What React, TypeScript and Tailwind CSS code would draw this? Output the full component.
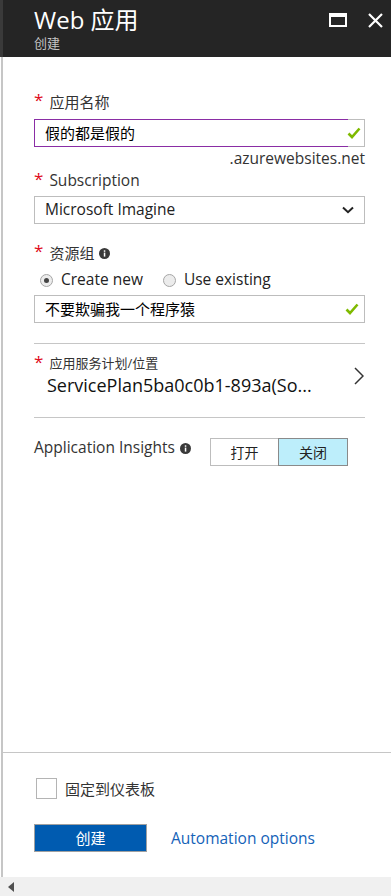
import React from "react";

const FONT = '"Open Sans", "Noto Sans", "Noto Sans CJK SC", sans-serif';

function Info() {
  return (
    <svg width="11" height="11" viewBox="0 0 11 11" className="inline-block">
      <circle cx="5.5" cy="5.5" r="5.5" fill="#3a3a3a" />
      <rect x="4.8" y="4.6" width="1.5" height="4" fill="#fff" />
      <rect x="4.8" y="2.3" width="1.5" height="1.5" fill="#fff" />
    </svg>
  );
}

function Check() {
  return (
    <svg width="14" height="12" viewBox="0 0 14 12">
      <path d="M1.5 6.5 L5 10 L12.5 1.5" stroke="#7fba00" strokeWidth="2.6" fill="none" />
    </svg>
  );
}

function Star() {
  return <span className="text-[#e00b1c] text-[17px] leading-none mr-[6px] relative top-[-3px]">*</span>;
}

function Radio({ checked }: { checked?: boolean }) {
  return (
    <span className="w-[13px] h-[13px] rounded-full border border-[#a6a6a6] bg-[#ececec] flex items-center justify-center">
      {checked && <span className="w-[5px] h-[5px] rounded-full bg-[#444]" />}
    </span>
  );
}

export default function App() {
  return (
    <div className="w-[391px] h-[896px] flex flex-col bg-white overflow-hidden" style={{ fontFamily: FONT }}>
      {/* Header */}
      <div className="h-[57px] bg-[#252525] flex shrink-0">
        <div className="w-[3px] bg-[#3a3a3a]" />
        <div className="flex-1 flex justify-between pl-[31px] pr-[8px]">
          <div className="flex flex-col pt-[8px]">
            <div className="text-white text-[24px] leading-[24px]">Web 应用</div>
            <div className="text-[#c4c4c4] text-[13px] leading-[16px] mt-[3px]">创建</div>
          </div>
          <div className="flex items-start pt-[13px] gap-[21px]">
            <div className="w-[18px] h-[14px] border-2 border-t-[4px] border-white" />
            <svg width="15" height="15" viewBox="0 0 15 15">
              <path d="M1 1 L14 14 M14 1 L1 14" stroke="#fff" strokeWidth="2.2" />
            </svg>
          </div>
        </div>
      </div>

      {/* Body */}
      <div className="flex-1 flex flex-col ml-[1px] border-l-2 border-[#c6c6c6]">
        <div className="flex-1 flex flex-col pl-[31px] pr-[26px]">
          <div className="mt-[35px] h-[20px] flex items-center text-[15px] text-[#333]">
            <Star />
            <span>应用名称</span>
          </div>
          <div className="mt-[7px] h-[28px] flex">
            <div className="flex-1 border border-[#8a2da5] border-r-0 flex items-center pl-[10px] text-[15px] text-black">
              假的都是假的
            </div>
            <div className="w-[17px] border border-l-0 border-[#bdbdbd] flex items-center justify-start">
              <span className="-ml-[1px]"><Check /></span>
            </div>
          </div>
          <div className="h-[20px] mt-[1px] text-right text-[15.5px] leading-[20px] text-[#333]">.azurewebsites.net</div>
          <div className="mt-[3px] h-[20px] flex items-center text-[15.5px] text-[#333]">
            <Star />
            <span>Subscription</span>
          </div>
          <div className="mt-[5px] h-[28px] border border-[#bdbdbd] flex items-center justify-between pl-[10px] pr-[10px] text-[15.5px] text-[#222]">
            <span>Microsoft Imagine</span>
            <svg width="12" height="8" viewBox="0 0 12 8">
              <path d="M1 1.5 L6 6.2 L11 1.5" stroke="#222" strokeWidth="2" fill="none" />
            </svg>
          </div>
          <div className="mt-[19px] h-[20px] flex items-center text-[15px] text-[#333]">
            <Star />
            <span>资源组</span>
            <span className="ml-[5px] flex"><Info /></span>
          </div>
          <div className="mt-[7px] h-[20px] flex items-center text-[15.5px] text-[#222] pl-[6px]">
            <Radio checked />
            <span className="ml-[8px]">Create new</span>
            <span className="ml-[20px]"><Radio /></span>
            <span className="ml-[8px]">Use existing</span>
          </div>
          <div className="mt-[5px] h-[28px] border border-[#bdbdbd] flex items-center justify-between pl-[10px] pr-[5px] text-[15px] text-black">
            <span>不要欺骗我一个程序猿</span>
            <Check />
          </div>
          <div className="mt-[20px] h-px bg-[#c6c6c6]" />
          <div className="mt-[11px] flex items-center justify-between">
            <div className="flex flex-col">
              <div className="h-[18px] flex items-center text-[13px] text-[#333]">
                <Star />
                <span>应用服务计划/位置</span>
              </div>
              <div className="h-[24px] text-[18px] leading-[24px] text-[#111] pl-[13px]">ServicePlan5ba0c0b1-893a(So...</div>
            </div>
            <svg width="10" height="18" viewBox="0 0 10 18" className="mr-[1px]">
              <path d="M1 1 L9 9 L1 17" stroke="#333" strokeWidth="1.5" fill="none" />
            </svg>
          </div>
          <div className="mt-[20px] h-px bg-[#c6c6c6]" />
          <div className="mt-[20px] flex items-start">
            <div className="w-[176px] h-[20px] mt-[0px] flex items-center text-[15.5px] text-[#333]">
              <span>Application Insights</span>
              <span className="ml-[5px] flex"><Info /></span>
            </div>
            <div className="flex h-[28px] text-[14px]">
              <div className="w-[68px] border border-r-0 border-[#bdbdbd] flex items-center justify-center text-[#222]">打开</div>
              <div className="w-[70px] border border-[#8a8a8a] bg-[#bdeefb] flex items-center justify-center text-[#222]">关闭</div>
            </div>
          </div>
        </div>

        {/* Footer */}
        <div className="h-[125px] border-t border-[#c6c6c6] flex flex-col pl-[31px]">
          <div className="mt-[25px] h-[21px] flex items-center">
            <div className="w-[21px] h-[21px] border border-[#b4b4b4] ml-[2px]" />
            <span className="ml-[8px] text-[15px] leading-[20px] text-[#333]">固定到仪表板</span>
          </div>
          <div className="mt-[25px] flex items-center">
            <button className="w-[113px] h-[28px] bg-[#005bb0] border border-[#a0a0a0] text-white text-[15px] flex items-center justify-center">创建</button>
            <span className="ml-[24px] text-[15.5px] leading-[20px] text-[#1462b8]">Automation options</span>
          </div>
        </div>
      </div>

      {/* Bottom scrollbar */}
      <div className="h-[19px] bg-[#f0f0f0] flex items-center pl-[8px] shrink-0">
        <svg width="6" height="10" viewBox="0 0 6 10">
          <path d="M6 0 L0 5 L6 10 Z" fill="#505050" />
        </svg>
      </div>
    </div>
  );
}
